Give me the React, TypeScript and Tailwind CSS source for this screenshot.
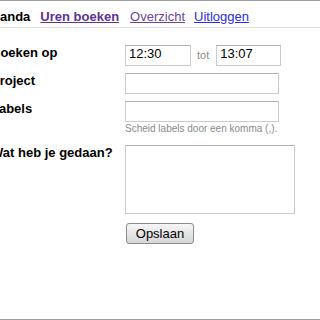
const font = "font-['Liberation_Sans',Arial,sans-serif]";

export default function App() {
  return (
    <div className={`h-[320px] overflow-hidden border-t border-b border-[#a0a0a0] bg-white text-[13px] leading-[15px] text-black ${font}`}>
      {/* menu */}
      <div className="flex items-baseline border-b border-[#dedede] pt-[8px] pb-[3px]">
        <span className="font-bold">anda</span>
        <a href="#" className="ml-[10px] font-bold text-[#5e3195] underline">Uren boeken</a>
        <a href="#" className="ml-[11px] text-[#6b449f] underline">Overzicht</a>
        <a href="#" className="ml-[9px] text-[#2b2bf0] underline">Uitloggen</a>
      </div>

      <form className="-ml-[9px] grid grid-cols-[134px_1fr] pt-[17px]" onSubmit={(e) => e.preventDefault()}>
        <label className="font-bold">Boeken op</label>
        <div className="mb-[7px] flex items-center">
          <input defaultValue="12:30" className="h-[21px] w-[66px] border border-[#cbcbcb] border-t-[#b0b0b0] px-[3px] pt-0 pb-[4px] text-[13px] leading-[15px] outline-none" />
          <span className="mx-[6px] text-[11px] text-[#8a8a8a]">tot</span>
          <input defaultValue="13:07" className="ml-[1px] h-[21px] w-[65px] border border-[#cbcbcb] border-t-[#b0b0b0] px-[3px] pt-0 pb-[4px] text-[13px] leading-[15px] outline-none" />
        </div>

        <label className="font-bold">Project</label>
        <div className="mb-[7px]">
          <input className="block h-[21px] w-[154px] border border-[#cbcbcb] border-t-[#b0b0b0] px-[3px] pt-0 pb-[4px] outline-none" />
        </div>

        <label className="font-bold">Labels</label>
        <div className="mb-[10px]">
          <input className="block h-[21px] w-[154px] border border-[#cbcbcb] border-t-[#b0b0b0] px-[3px] pt-0 pb-[4px] outline-none" />
          <p className="mt-[1px] text-[10px] leading-[12px] text-[#8a8a8a]">Scheid labels door een komma (,).</p>
        </div>

        <label className="font-bold">Wat heb je gedaan?</label>
        <div className="mb-[9px]">
          <textarea className="block h-[69px] w-[170px] resize-none border border-[#cbcbcb] border-t-[#b0b0b0] outline-none" />
        </div>

        <div />
        <div>
          <button type="submit" className="ml-[1px] h-[21px] w-[68px] rounded-[3px] border border-[#8c8c8c] bg-gradient-to-b from-[#f6f6f6] to-[#d6d6d6] text-[13px] leading-[15px]">
            Opslaan
          </button>
        </div>
      </form>
    </div>
  );
}
